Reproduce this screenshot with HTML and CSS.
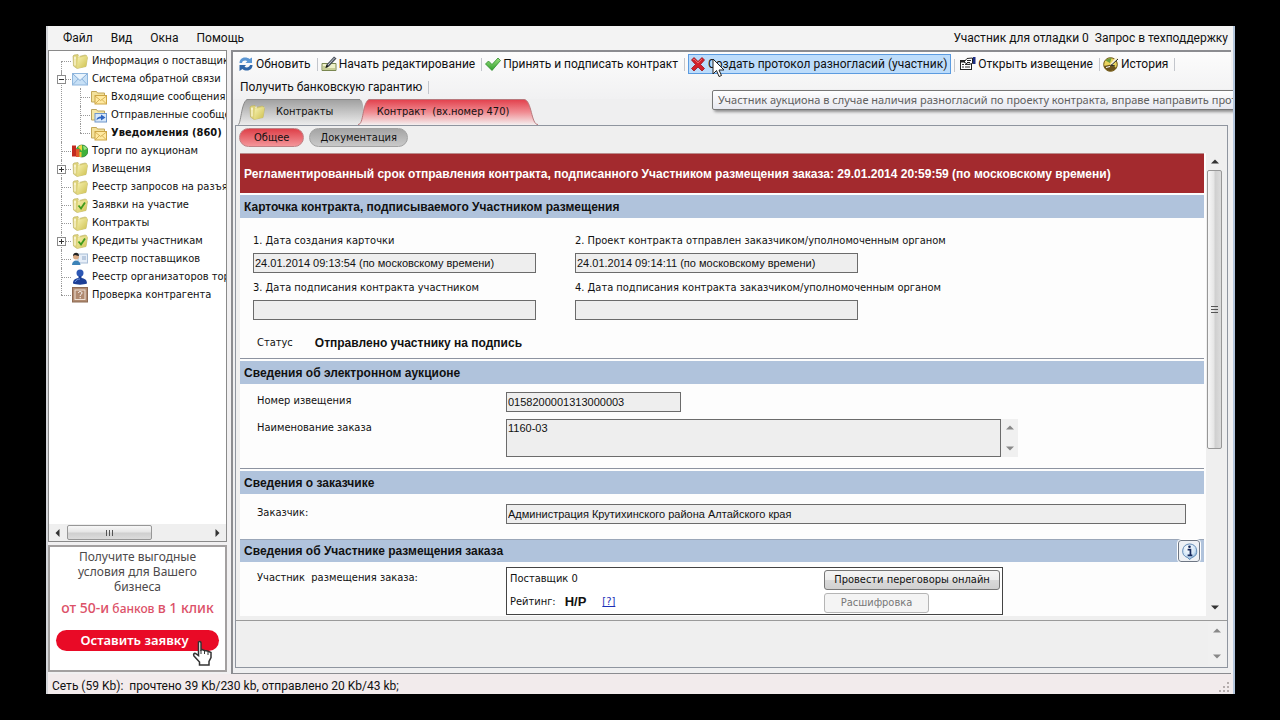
FILE: index.html
```html
<!DOCTYPE html>
<html lang="ru">
<head>
<meta charset="utf-8">
<title>Контракт (вх.номер 470)</title>
<link rel="stylesheet" href="styles.css">
</head>
<body>
<svg class="defs" aria-hidden="true">
  <defs>
    <linearGradient id="g-folder" x1="0" y1="0" x2="1" y2="1"><stop offset="0" stop-color="#f8f3b4"/><stop offset="1" stop-color="#cdbf4c"/></linearGradient>
    <linearGradient id="g-gray" x1="0" y1="0" x2="0" y2="1"><stop offset="0" stop-color="#a0a0a0"/><stop offset=".5" stop-color="#c6c6c6"/><stop offset="1" stop-color="#ececec"/></linearGradient>
    <linearGradient id="g-red" x1="0" y1="0" x2="0" y2="1"><stop offset="0" stop-color="#e2404c"/><stop offset=".5" stop-color="#f08c92"/><stop offset="1" stop-color="#f4f0f0"/></linearGradient>
    <radialGradient id="g-info" cx=".4" cy=".3" r=".8"><stop offset="0" stop-color="#fff"/><stop offset=".6" stop-color="#cfe4f6"/><stop offset="1" stop-color="#5b93c8"/></radialGradient>
    <linearGradient id="g-green" x1="0" y1="0" x2="0" y2="1"><stop offset="0" stop-color="#9be07f"/><stop offset="1" stop-color="#2f9e2c"/></linearGradient>
    <symbol id="folder" viewBox="0 0 16 16"><path d="M1 3l1-1 4-.5 1 2 6-1.500 1.500.5V4l1 .5-1.500 9L5 15.500 1.500 13z" fill="#ddd27a" stroke="#b9ae62" stroke-width=".6"/><path d="M6 5l9.500-2-1.500 10.500L5 15.500z" fill="url(#g-folder)"/><path d="M3 3.500v9M2 5h2M7 2.500v2" stroke="#fffbe0" stroke-width="1.200" fill="none"/></symbol>
    <symbol id="folder-check" viewBox="0 0 16 16"><use href="#folder"/><path d="M6.500 8.500l2.500 3 4-6" fill="none" stroke="#3f9a1c" stroke-width="1.800"/></symbol>
    <symbol id="mail" viewBox="0 0 16 16"><rect x=".5" y="2.500" width="15" height="11.500" fill="#c7e0f6" stroke="#8fb6dd"/><path d="M1 13.500l5.500-6M15 13.500l-5.500-6" stroke="#8fb6dd" fill="none"/><path d="M1 3l7 6.500L15 3" fill="#e9f4fd" stroke="#86acd6"/></symbol>
    <symbol id="folder-mail" viewBox="0 0 16 16"><path d="M.5 2.500h5l1 1.500h7v9h-13z" fill="#f3e19a" stroke="#c2a75a"/><rect x="4" y="6.500" width="11.500" height="8.500" fill="#ffe9a0" stroke="#cda545"/><path d="M4 7l5.700 4.500L15.500 7M4.500 14.500l4-4M15 14.500l-4-4" fill="none" stroke="#cda545" stroke-width=".8"/></symbol>
    <symbol id="folder-sent" viewBox="0 0 16 16"><path d="M.5 2.500h5l1 1.500h7v9h-13z" fill="#f5e7a6" stroke="#b9a25e"/><rect x="4" y="6.500" width="11.500" height="8.500" fill="#d7e8fa" stroke="#6f96ca"/><path d="M5.500 13.500c0-3 2-4 4.500-4V7.500l4.500 3-4.500 3v-2c-2 0-3.500.5-4.500 2z" fill="#2f66c2"/></symbol>
    <symbol id="auction" viewBox="0 0 16 16"><circle cx="10" cy="8" r="6" fill="#3fb13a" stroke="#1c7426" stroke-width=".7"/><path d="M10 8V2a6 6 0 0 0-4 2z" fill="#f2d544"/><path d="M11 3c2 0 3.500 1 4 3l-3 1z" fill="#9be27f"/><path d="M0 2.500h4v11H0z" fill="#c22a20"/><path d="M4 6h3.500v8H4z" fill="#e2582c"/><path d="M7.500 9h2v5h-2z" fill="#f0c43a"/></symbol>
    <symbol id="supplier" viewBox="0 0 16 16"><rect x="6" y="3" width="9.500" height="9" fill="#e6eef8" stroke="#a8bdd6"/><path d="M10 6h4M10 8h4" stroke="#8fa8c8"/><circle cx="4" cy="5.500" r="3" fill="#d9a982"/><path d="M1 5c0-4 6-4.500 6 0-2 0-3-1-4-1z" fill="#222"/><path d="M0 14c0-6 8-6 8.500 0z" fill="#3c83b8"/></symbol>
    <symbol id="person" viewBox="0 0 16 16"><circle cx="8" cy="4" r="3.500" fill="#2c57b4"/><path d="M6.500 7h3v2c4 .5 5.500 2.500 5.500 5.500-4 1.500-10 1.500-14 0C1 11.500 2.500 9.500 6.500 9z" fill="#1c3f96"/><path d="M3 13c1-2 3-3 5-3" stroke="#6e97e0" fill="none"/></symbol>
    <symbol id="check-agent" viewBox="0 0 16 16"><rect x=".5" y=".5" width="15" height="14.500" fill="#b08a70" stroke="#8d6a53"/><rect x="3" y="3" width="10" height="9.500" fill="none" stroke="#efe1d6"/><path d="M6.500 6c0-2 3.500-2 3.500 0 0 1.500-1.800 1.200-1.800 2.800M8.200 10v1.300" fill="none" stroke="#fff"/></symbol>
    <symbol id="refresh" viewBox="0 0 16 16"><path d="M1.500 7C1.500 4 3.500 1.500 7 1.500c2 0 3.500.5 4.500 1.500l2.500-1.500V7H7.500l1.800-1.800C7.500 4 4.500 4.500 4 7z" fill="#5b96d2"/><path d="M14.500 9c0 3-2 5.500-5.500 5.500-2 0-3.500-.5-4.500-1.500L1.500 15V9H8l-1.500 1.800c2 1.200 5 .7 5.500-1.800z" fill="#2f66a8"/></symbol>
    <symbol id="edit" viewBox="0 0 16 16"><path d="M1 7.500h14v7H1z" fill="#eef0c8" stroke="#7a8750"/><path d="M2 13h12M2 11h5" stroke="#a0ab62"/><path d="M4.500 12l1-3.500 7.500-8 2.500 2-7.500 8z" fill="#49505a"/><path d="M7 9l6.500-7" stroke="#c4ccd4"/><path d="M4.500 12l1-3 2 1.500z" fill="#111"/></symbol>
    <symbol id="check" viewBox="0 0 16 16"><path d="M.5 8L3.500 5 7 8.500 13 2l2.500 2.500L7 14.500z" fill="url(#g-green)" stroke="#2c8c2a" stroke-width=".8"/></symbol>
    <symbol id="cross" viewBox="0 0 16 16"><path d="M1.500 4l2.500-2.500 4 4L12 1.500 14.500 4l-4 4.500 4 4L12 15l-4-4-4 4-2.500-2.500 4-4z" fill="#d3202a" stroke="#9c1118" stroke-width=".8"/><path d="M3 4l1-1 4 4 4-4" fill="none" stroke="#f27a78" stroke-width=".8"/></symbol>
    <symbol id="open" viewBox="0 0 16 16"><rect x=".5" y="4.500" width="11" height="9" fill="#fff" stroke="#222"/><path d="M.5 5.500h11" stroke="#222" stroke-width="2"/><path d="M2 8.500h2M2 11h2M5 8.500h5M5 11h5" stroke="#333"/><path d="M4 6l3-3.500L12.500 2v5.500L8 8.500z" fill="#fff" stroke="#222"/><path d="M7 6.500h3M7 4.500h4" stroke="#222"/><path d="M13 1h2.500v7H13z" fill="#1d2f87"/></symbol>
    <symbol id="history" viewBox="0 0 16 16"><circle cx="7.500" cy="8.500" r="6.800" fill="#e9d25c" stroke="#6c5410"/><path d="M1 10a7 7 0 0 0 12.500 2L8 8.500z" fill="#6b521c"/><path d="M2.500 4.500a7 7 0 0 1 6-2.500L7 7z" fill="#6f9c3c"/><path d="M8 9l6-7" stroke="#f8f3d8" stroke-width="2.500"/><path d="M8 9.500l7-6.500M8 9l4 1" stroke="#222"/><path d="M3 11.500l4-1" stroke="#fff"/></symbol>
    <symbol id="info" viewBox="0 0 18 18"><path d="M9 1a8 7.500 0 0 1 2.500 14.500L9 17.500l-2-2A8 7.500 0 0 1 9 1z" fill="url(#g-info)" stroke="#5d87b2"/><path d="M7 7h3v5.500M7 13h5" fill="none" stroke="#14285c" stroke-width="1.800"/><circle cx="9" cy="4" r="1.400" fill="#14285c"/></symbol>
    <symbol id="up" viewBox="0 0 8 5"><path d="M0 4.500L4 .5l4 4z"/></symbol>
    <symbol id="down" viewBox="0 0 8 5"><path d="M0 .5l4 4 4-4z"/></symbol>
    <symbol id="left" viewBox="0 0 5 8"><path d="M4.500 0l-4 4 4 4z"/></symbol>
    <symbol id="right" viewBox="0 0 5 8"><path d="M.5 0l4 4-4 4z"/></symbol>
  </defs>
</svg>

<div class="window">
  <header class="menubar">
    <nav class="menus">
      <button type="button">Файл</button>
      <button type="button">Вид</button>
      <button type="button">Окна</button>
      <button type="button">Помощь</button>
    </nav>
    <div class="user">
      <span>Участник для отладки 0</span>
      <button type="button">Запрос в техподдержку</button>
    </div>
  </header>

  <div class="workspace">
    <aside class="sidebar">
      <div class="tree-panel">
        <ul class="tree">
          <li><div class="node"><svg class="icon"><use href="#folder"/></svg><span>Информация о поставщике</span></div></li>
          <li><button class="toggle minus" type="button" aria-label="Свернуть"></button><div class="node"><svg class="icon"><use href="#mail"/></svg><span>Система обратной связи</span></div>
            <ul>
              <li><div class="node"><svg class="icon"><use href="#folder-mail"/></svg><span>Входящие сообщения</span></div></li>
              <li><div class="node"><svg class="icon"><use href="#folder-sent"/></svg><span>Отправленные сообщения</span></div></li>
              <li><div class="node"><svg class="icon"><use href="#folder-mail"/></svg><strong>Уведомления (860)</strong></div></li>
            </ul>
          </li>
          <li><div class="node"><svg class="icon"><use href="#auction"/></svg><span>Торги по аукционам</span></div></li>
          <li><button class="toggle" type="button" aria-label="Развернуть"></button><div class="node"><svg class="icon"><use href="#folder"/></svg><span>Извещения</span></div></li>
          <li><div class="node"><svg class="icon"><use href="#folder"/></svg><span>Реестр запросов на разъяснение</span></div></li>
          <li><div class="node"><svg class="icon"><use href="#folder-check"/></svg><span>Заявки на участие</span></div></li>
          <li><div class="node"><svg class="icon"><use href="#folder"/></svg><span>Контракты</span></div></li>
          <li><button class="toggle" type="button" aria-label="Развернуть"></button><div class="node"><svg class="icon"><use href="#folder-check"/></svg><span>Кредиты участникам</span></div></li>
          <li><div class="node"><svg class="icon"><use href="#supplier"/></svg><span>Реестр поставщиков</span></div></li>
          <li><div class="node"><svg class="icon"><use href="#person"/></svg><span>Реестр организаторов торгов</span></div></li>
          <li><div class="node"><svg class="icon"><use href="#check-agent"/></svg><span>Проверка контрагента</span></div></li>
        </ul>
        <div class="hscroll">
          <svg class="arrow-h"><use href="#left"/></svg>
          <div class="hscroll-track"><div class="hthumb"><i></i><i></i><i></i></div></div>
          <svg class="arrow-h"><use href="#right"/></svg>
        </div>
      </div>
      <div class="ad">
        <p class="ad-text">Получите выгодные<br>условия для Вашего<br>бизнеса</p>
        <p class="ad-accent"><span class="big">от 50-и</span> банков <span class="big">в 1 клик</span></p>
        <button class="ad-button" type="button">Оставить заявку</button>
        <svg class="hand" viewBox="0 0 20 26"><path d="M6.500 2c1.500-1 2.500 0 2.500 1v7l1-.5 2.500 1 3 .5 3.500 1.500v5l-2 4v3.500H7.500v-3L2 16c-1-1.500 0-3 1.500-2.500l3 2z" fill="#fff" stroke="#333" stroke-width="1.500"/><path d="M9 10v4M12.500 11v3M16 12v3" stroke="#333"/></svg>
      </div>
    </aside>

    <main class="document">
      <div class="toolbar">
        <div class="toolrow">
          <button type="button"><svg class="icon"><use href="#refresh"/></svg>Обновить</button>
          <button type="button"><svg class="icon"><use href="#edit"/></svg>Начать редактирование</button>
          <button type="button"><svg class="icon"><use href="#check"/></svg>Принять и подписать контракт</button>
          <button type="button" class="hot"><svg class="icon"><use href="#cross"/></svg>Создать протокол разногласий (участник)</button>
          <button type="button"><svg class="icon"><use href="#open"/></svg>Открыть извещение</button>
          <button type="button"><svg class="icon"><use href="#history"/></svg>История</button>
        </div>
        <div class="toolrow second">
          <button type="button">Получить банковскую гарантию</button>
        </div>
      </div>

      <div class="tabs">
        <button type="button" class="tab tab-gray"><svg class="tab-shape" viewBox="0 0 126 26" preserveAspectRatio="none"><path d="M0 26C3 26 3 4 9 .5H122C127 1 126 26 126 26z" fill="url(#g-gray)"/><path d="M0 25.500C3 26 3 4 9 .5H122" fill="none" stroke="#8a8a8a"/></svg><svg class="icon"><use href="#folder"/></svg><span>Контракты</span></button>
        <button type="button" class="tab tab-red"><svg class="tab-shape" viewBox="0 0 180 26" preserveAspectRatio="none"><path d="M0 26C6 26 4 4 11 .5H166C174 1 173 26 180 26z" fill="url(#g-red)"/><path d="M0 25.500C6 26 4 4 11 .5H166C174 1 173 26 180 25.500" fill="none" stroke="#b8787c"/></svg><span>Контракт&nbsp; (вх.номер 470)</span></button>
      </div>

      <div class="page">
        <div class="pills">
          <button type="button" class="pill pill-red">Общее</button>
          <button type="button" class="pill">Документация</button>
        </div>
        <div class="scroller">
          <form class="form">
            <div class="banner">Регламентированный срок отправления контракта, подписанного Участником размещения заказа: 29.01.2014 20:59:59 (по московскому времени)</div>
            <h2>Карточка контракта, подписываемого Участником размещения</h2>
            <section class="dates">
              <div class="field"><label for="d1">1. Дата создания карточки</label><input id="d1" readonly value="24.01.2014 09:13:54 (по московскому времени)"></div>
              <div class="field"><label for="d2">2. Проект контракта отправлен заказчиком/уполномоченным органом</label><input id="d2" readonly value="24.01.2014 09:14:11 (по московскому времени)"></div>
              <div class="field"><label for="d3">3. Дата подписания контракта участником</label><input id="d3" readonly></div>
              <div class="field"><label for="d4">4. Дата подписания контракта заказчиком/уполномоченным органом</label><input id="d4" readonly></div>
            </section>
            <div class="status-row"><span>Статус</span><strong>Отправлено участнику на подпись</strong></div>
            <h2 class="ruled">Сведения об электронном аукционе</h2>
            <section class="auction">
              <div class="line"><label for="num">Номер извещения</label><input id="num" class="short" readonly value="0158200001313000003"></div>
              <div class="line"><label for="name">Наименование заказа</label><textarea id="name" readonly>1160-03</textarea><div class="mini-scroll"><svg class="arrow"><use href="#up"/></svg><svg class="arrow"><use href="#down"/></svg></div></div>
            </section>
            <h2 class="ruled">Сведения о заказчике</h2>
            <section class="customer">
              <div class="line"><label for="cust">Заказчик:</label><input id="cust" class="long" readonly value="Администрация Крутихинского района Алтайского края"></div>
            </section>
            <h2 class="with-info"><span>Сведения об Участнике размещения заказа</span><button type="button" class="info" aria-label="Справка"><svg><use href="#info"/></svg></button></h2>
            <section class="participant">
              <div class="line"><span class="label">Участник&nbsp; размещения заказа:</span>
                <div class="supplier-box">
                  <div class="supplier-info"><span>Поставщик 0</span><div class="rating"><span>Рейтинг:</span><strong>Н/Р</strong><a href="#rating">[?]</a></div></div>
                  <div class="supplier-actions"><button type="button" class="btn">Провести переговоры онлайн</button><button type="button" class="btn narrow" disabled>Расшифровка</button></div>
                </div>
              </div>
            </section>
          </form>
          <div class="vscroll">
            <svg class="arrow"><use href="#up"/></svg>
            <div class="vtrack"><div class="vthumb"><i></i><i></i><i></i></div></div>
            <svg class="arrow"><use href="#down"/></svg>
          </div>
        </div>
        <div class="log">
          <div class="mini-scroll"><svg class="arrow"><use href="#up"/></svg><svg class="arrow"><use href="#down"/></svg></div>
        </div>
      </div>
    </main>
  </div>

  <footer class="statusbar">
    <span>Сеть (59 Kb):&nbsp; прочтено 39 Kb/230 kb, отправлено 20 Kb/43 kb;</span>
    <svg class="grip" viewBox="0 0 12 12"><path d="M8 0h2v2H8zM4 4h2v2H4zM8 4h2v2H8zM0 8h2v2H0zM4 8h2v2H4zM8 8h2v2H8z" fill="#b5adad"/></svg>
  </footer>

  <div class="tooltip" role="tooltip">Участник аукциона в случае наличия разногласий по проекту контракта, вправе направить протокол разногласий</div>
  <svg class="pointer" viewBox="0 0 13 20"><path d="M1 1v15l3.500-3.500L7 18.500l2.500-1L7 12h5z" fill="#fff" stroke="#222"/></svg>
</div>
</body>
</html>
```
FILE: styles.css
```css
* { box-sizing: border-box; }
body {
  margin: 0;
  height: 100vh;
  padding: 26px 45px 26px 46px;
  background: #000;
  color: #111;
  font-family: Roboto, "Noto Sans", sans-serif;
  font-size: 12px;
  line-height: 16px;
}
button, input, textarea { font: inherit; color: inherit; margin: 0; }
button { border: 0; padding: 0; background: none; white-space: nowrap; }
p, h2, ul { margin: 0; padding: 0; }
li { list-style: none; }
.defs { position: absolute; width: 0; height: 0; }
.icon { width: 16px; height: 16px; flex: none; }

.window {
  position: relative;
  display: flex;
  flex-direction: column;
  height: 100%;
  overflow: hidden;
  background: #f1f0f1;
  border-left: 2px solid #d4d6da;
  border-right: 2px solid #b4c6dc;
}

.menubar {
  display: flex;
  justify-content: space-between;
  align-items: center;
  height: 24px;
  flex: none;
  padding: 0 5px 0 15px;
  background: #f3f3f3;
}
.menus { display: flex; gap: 18px; }
.user { display: flex; gap: 6px; }

.workspace { display: flex; flex: 1; min-height: 0; gap: 4px; padding-right: 2px; }
.sidebar { display: flex; flex-direction: column; width: 179px; flex: none; gap: 3px; padding: 0 0 2px; }
.tree-panel {
  flex: 1;
  display: flex;
  flex-direction: column;
  border: 1px solid #8a8a8a;
  background: #fff;
  overflow: hidden;
  font-family: "DejaVu Sans Condensed", "DejaVu Sans", sans-serif;
  font-size: 11px;
}
.tree { flex: 1; padding: 1px 0 0 12px; }
.tree li { position: relative; padding-left: 11px; }
.tree li::before {
  content: "";
  position: absolute;
  left: 0;
  top: 0;
  height: 100%;
  border-left: 1px dotted #999;
}
.tree > li:first-child::before { top: 9px; }
.tree li:last-child::before { height: 9px; }
.tree li::after {
  content: "";
  position: absolute;
  left: 0;
  top: 9px;
  width: 10px;
  border-top: 1px dotted #999;
}
.tree ul { padding-left: 8px; }
.node { display: flex; align-items: center; gap: 4px; height: 18px; white-space: nowrap; }
.toggle {
  position: absolute;
  z-index: 1;
  left: -4px;
  top: 5px;
  width: 9px;
  height: 9px;
  border: 1px solid #8c8c8c;
  background:
    linear-gradient(#333, #333) center / 5px 1px no-repeat,
    linear-gradient(#333, #333) center / 1px 5px no-repeat,
    #fff;
}
.toggle.minus { background: linear-gradient(#333, #333) center / 5px 1px no-repeat, #fff; }

.hscroll { display: flex; align-items: center; height: 17px; padding: 0 6px; background: #efefef; gap: 7px; }
.arrow-h { width: 5px; height: 8px; fill: #333; }
.hscroll-track { flex: 1; }
.hthumb {
  display: flex;
  justify-content: center;
  align-items: center;
  gap: 2px;
  width: 60%;
  height: 15px;
  border: 1px solid #979797;
  border-radius: 2px;
  background: linear-gradient(#f7f7f7, #e6e6e6 45%, #cfcfcf 55%, #dcdcdc);
}
.hthumb i { width: 1px; height: 6px; background: #555; }

.ad {
  position: relative;
  display: flex;
  flex-direction: column;
  align-items: center;
  height: 127px;
  flex: none;
  padding: 2px 6px;
  border: 2px solid #a3a0a0;
  background: #fff;
  color: #4d4a4b;
  font-family: "Noto Sans", sans-serif;
  line-height: 15px;
  text-align: center;
}
.ad-accent { margin-top: 6px; color: #dc5168; font-weight: 500; white-space: nowrap; }
.ad-accent .big { font-size: 14px; }
.ad-button {
  align-self: stretch;
  height: 21px;
  margin-top: 14px;
  padding-right: 6px;
  border-radius: 11px;
  background: #e90a26;
  color: #fff;
  font-size: 13px;
  font-weight: 600;
}
.hand { position: absolute; right: 13px; bottom: 4px; width: 20px; height: 26px; }

.document {
  flex: 1;
  min-width: 0;
  display: flex;
  flex-direction: column;
  padding: 0 3px 5px 2px;
  border: solid #8b8c90;
  border-width: 2px 0 1px 2px;
  background: #efeff0;
}
.toolbar { margin: 0 -3px 0 -2px; background: linear-gradient(#fcfcfc, #f1f1f2); padding: 0 5px 1px; }
.toolrow { display: flex; align-items: center; height: 23px; }
.toolrow.second { padding-left: 2px; }
.toolrow button { position: relative; display: flex; align-items: center; gap: 2px; height: 20px; margin-right: 10px; }
.toolrow button::after {
  content: "";
  position: absolute;
  right: -7px;
  top: 4px;
  height: 13px;
  border-right: 1px solid #c3c6cc;
}
.toolrow .hot { border: 1px solid #5b9be0; background: #bcdcfb; padding: 0 3px 0 1px; margin: 0 9px 0 0; }
.toolrow .hot::after { right: -5px; }

.tabs { display: flex; height: 26px; font-family: "DejaVu Sans Condensed", "DejaVu Sans", sans-serif; font-size: 11px; }
.tab { position: relative; display: flex; align-items: center; justify-content: center; height: 26px; }
.tab span, .tab .icon { position: relative; }
.tab-shape { position: absolute; left: 0; top: 0; width: 100%; height: 100%; }
.tab-gray { width: 126px; justify-content: flex-start; gap: 11px; padding-left: 11px; margin-left: 3px; }
.tab-red { width: 180px; margin-left: -6px; padding-right: 10px; }

.page {
  flex: 1;
  min-height: 0;
  display: flex;
  flex-direction: column;
  border: 1px solid #8f959f;
  background: #efefef;
  font-size: 11px;
}
.pills { display: flex; gap: 5px; height: 27px; padding: 2px 4px 0 3px; }
.pill {
  height: 19px;
  padding: 0 10px;
  border: 1px solid #a2a2a2;
  border-radius: 10px;
  background: linear-gradient(#a4a4a4, #c9c9c9);
  font-family: "DejaVu Sans Condensed", "DejaVu Sans", sans-serif;
}
.pill-red { padding: 0 14px; background: linear-gradient(#de4049, #f49599); border-color: #c08084; }

.scroller { flex: 1; min-height: 0; display: flex; padding-left: 4px; }
.form {
  flex: 1;
  min-width: 0;
  overflow: hidden;
  background: #fdfdfd;
  font-family: "DejaVu Sans Condensed", "DejaVu Sans", sans-serif;
}
.banner {
  display: flex;
  align-items: center;
  height: 40px;
  padding: 0 4px;
  border-top: 1px solid #b98a8a;
  background: #a32a2e;
  color: #fff;
  font-family: "Liberation Sans", sans-serif;
  font-weight: bold;
  font-size: 12px;
  white-space: nowrap;
}
h2 {
  display: flex;
  align-items: center;
  height: 23px;
  margin-top: 2px;
  padding: 0 4px;
  background: #b0c3dc;
  font-family: "Liberation Sans", sans-serif;
  font-size: 12px;
}
h2.ruled { position: relative; margin-top: 3px; }
h2.ruled::before { content: ""; position: absolute; left: 0; right: 0; top: -3px; border-top: 1px solid #8d93a0; }
.with-info { justify-content: space-between; border-top: 1px solid #9aa6b8; }
.info {
  display: grid;
  place-items: center;
  width: 22px;
  height: 22px;
  border: 1px solid #6e7683;
  border-radius: 3px;
  outline: 1px solid #fff;
  background: #eef1f5;
}
.info svg { width: 17px; height: 17px; }

input, textarea {
  border: 1px solid #6b6b6b;
  border-radius: 0;
  background: #eee;
  height: 20px;
  padding: 0 1px;
  font-family: "Liberation Sans", sans-serif;
  outline: 0;
}
.dates { display: grid; grid-template-columns: 283px minmax(0, 1fr); column-gap: 39px; row-gap: 7px; padding: 15px 13px 0; }
.field { display: flex; flex-direction: column; gap: 4px; }
.field input { width: 283px; }
.status-row { display: flex; align-items: center; gap: 22px; height: 38px; padding: 8px 17px 0; }
.status-row strong { font-family: "Liberation Sans", sans-serif; font-size: 12px; }
.line { display: flex; align-items: flex-start; }
.line label, .line .label { width: 249px; flex: none; padding-top: 1px; }
.auction { display: flex; flex-direction: column; gap: 7px; padding: 8px 17px 11px; }
.short { width: 175px; }
textarea { width: 495px; height: 38px; resize: none; overflow: hidden; display: block; }
.customer { padding: 10px 18px 13px 17px; }
.long { flex: 1; }
.mini-scroll { display: flex; flex-direction: column; justify-content: space-between; align-items: center; width: 17px; padding: 6px 0; background: #f0f0f0; }
.line .mini-scroll { align-self: stretch; }
.arrow { width: 8px; height: 5px; fill: #888; flex: none; }
.participant { padding: 5px 17px 0; }
.participant .line .label { padding-top: 3px; }
.supplier-box { display: flex; justify-content: space-between; width: 497px; height: 48px; padding: 2px 2px 0 3px; border: 1px solid #444; background: #fff; }
.supplier-info, .supplier-actions { display: flex; flex-direction: column; }
.supplier-info { gap: 7px; padding-top: 1px; }
.supplier-actions { gap: 3px; width: 176px; align-items: flex-start; }
.rating { display: flex; gap: 9px; }
.rating strong { font-family: "Liberation Sans", sans-serif; font-size: 13px; }
.rating a { color: #1b2fb8; margin-left: 7px; }
.btn {
  width: 100%;
  height: 20px;
  border: 1px solid #777;
  border-radius: 3px;
  background: linear-gradient(#f4f4f4, #ececec 50%, #dadada 50%, #d0d0d0);
}
.btn.narrow { width: 105px; }
.btn:disabled { color: #777; background: #f4f4f4; border-color: #b5b5b5; }

.vscroll { width: 23px; display: flex; flex-direction: column; align-items: center; gap: 6px; padding: 6px 5px 6px 1px; border-left: 2px solid #fdfdfd; background: #efefef; }
.vscroll .arrow { fill: #333; }
.vtrack { flex: 1; align-self: stretch; }
.vthumb {
  display: flex;
  flex-direction: column;
  align-items: center;
  justify-content: center;
  gap: 2px;
  height: 65%;
  border: 1px solid #979797;
  border-radius: 2px;
  background: linear-gradient(90deg, #f7f7f7, #e6e6e6 45%, #cfcfcf 55%, #dcdcdc);
}
.vthumb i { width: 7px; height: 1px; background: #555; }
.log { display: flex; justify-content: flex-end; height: 47px; margin-top: 4px; padding: 1px 2px 2px; border-top: 1px solid #9a9a9a; }

.statusbar { display: flex; align-items: center; justify-content: space-between; height: 20px; flex: none; padding: 3px 2px 0 4px; background: #f2ebec; }
.grip { width: 12px; height: 12px; align-self: flex-end; }

.tooltip {
  position: absolute;
  left: 664px;
  right: -4px;
  top: 64px;
  height: 20px;
  padding: 1px 5px;
  border: 1px solid #777;
  border-radius: 2px;
  background: linear-gradient(#fff, #e7e8f0);
  box-shadow: 2px 2px 3px #0006;
  color: #606060;
  font-family: "Noto Sans", sans-serif;
  font-size: 11px;
  white-space: nowrap;
  overflow: hidden;
}
.pointer { position: absolute; left: 664px; top: 32px; width: 13px; height: 20px; }
```
